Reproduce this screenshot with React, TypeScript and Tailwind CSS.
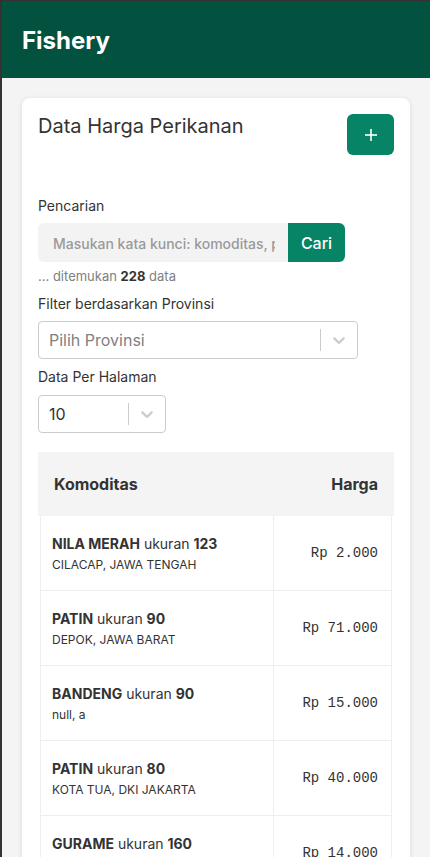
const rows = [
  { name: 'NILA MERAH', size: '123', area: 'CILACAP, JAWA TENGAH', price: 'Rp 2.000' },
  { name: 'PATIN', size: '90', area: 'DEPOK, JAWA BARAT', price: 'Rp 71.000' },
  { name: 'BANDENG', size: '90', area: 'null, a', price: 'Rp 15.000' },
  { name: 'PATIN', size: '80', area: 'KOTA TUA, DKI JAKARTA', price: 'Rp 40.000' },
  { name: 'GURAME', size: '160', area: 'BOGOR, JAWA BARAT', price: 'Rp 14.000' },
];

function Chevron() {
  return (
    <svg viewBox="0 0 20 20" className="h-5 w-5 fill-[#cccccc]">
      <path d="M4.516 7.548c0.436-0.446 1.043-0.481 1.576 0l3.908 3.747 3.908-3.747c0.533-0.481 1.141-0.446 1.574 0 0.436 0.445 0.408 1.197 0 1.615-0.406 0.418-4.695 4.502-4.695 4.502-0.217 0.223-0.502 0.335-0.787 0.335s-0.57-0.112-0.789-0.335c0 0-4.287-4.084-4.695-4.502s-0.436-1.17 0-1.615z" />
    </svg>
  );
}

function Select({ value, placeholder, width }: { value?: string; placeholder?: string; width: string }) {
  return (
    <div className={`flex h-[38px] items-center rounded border border-[#cccccc] bg-white ${width}`}>
      <div className="flex-1 pl-[10px] text-base">
        {value ? (
          <span className="text-[#333333]">{value}</span>
        ) : (
          <span className="text-[#808080]">{placeholder}</span>
        )}
      </div>
      <span className="h-[22px] w-px bg-[#cccccc]" />
      <div className="flex w-9 justify-center">
        <Chevron />
      </div>
    </div>
  );
}

export default function App() {
  return (
    <div
      className="h-[857px] overflow-hidden border-l-2 border-t border-[#333333] bg-[#f4f4f4] text-[#333333]"
      style={{ fontFamily: 'Inter, "Noto Sans", sans-serif' }}
    >
      {/* Header */}
      <header className="flex h-[77px] items-center bg-[#03513f] px-5 pt-[3px]">
        <h1 className="text-2xl font-bold text-white">Fishery</h1>
      </header>

      <main className="px-5 pt-5">
        <div className="rounded-lg bg-white p-4 shadow-[0_1px_5px_rgba(0,0,0,0.12)]">
          <div className="flex items-start justify-between">
            <h2 className="text-[20px] leading-6">Data Harga Perikanan</h2>
            <button className="flex h-[41px] w-[47px] items-center justify-center rounded-md bg-[#068465]">
              <svg viewBox="0 0 14 14" className="h-[14px] w-[14px]" stroke="white" strokeWidth="1.6">
                <line x1="7" y1="1" x2="7" y2="13" />
                <line x1="1" y1="7" x2="13" y2="7" />
              </svg>
            </button>
          </div>

          {/* Search */}
          <p className="mt-[41px] text-sm leading-5">Pencarian</p>
          <div className="mt-[7px] flex h-[39px] w-[307px]">
            <div className="flex min-w-0 flex-1 items-center rounded-l-md bg-[#f3f3f3] pl-[15px] pr-[13px]">
              <div className="overflow-hidden">
                <span className="whitespace-nowrap text-sm font-medium text-[#9a9a9a]">Masukan kata kunci: komoditas, provinsi</span>
              </div>
            </div>
            <button className="w-[57px] shrink-0 rounded-r-md bg-[#068465] text-base font-medium text-white">Cari</button>
          </div>
          <p className="mt-[6px] text-[13px] leading-4 text-[#808080]">
            ... ditemukan <b className="text-[#333333]">228</b> data
          </p>

          {/* Province filter */}
          <p className="mt-[10px] text-sm leading-5">Filter berdasarkan Provinsi</p>
          <div className="mt-[7px]">
            <Select placeholder="Pilih Provinsi" width="w-[320px]" />
          </div>

          <p className="mt-2 text-sm leading-5">Data Per Halaman</p>
          <div className="mt-2">
            <Select value="10" width="w-32" />
          </div>

          {/* Table */}
          <div className="mt-[19px]">
            <div className="flex h-16 items-center justify-between bg-[#f4f4f4] px-4 text-base font-bold">
              <span>Komoditas</span>
              <span>Harga</span>
            </div>
            <div className="mx-[2px]">
              {rows.map((r, i) => (
                <div key={i} className="flex h-[75px] border-x border-b border-[#eeeeee]">
                  <div className="flex w-[233px] flex-col justify-center border-r border-[#eeeeee] pl-[11px]">
                    <p className="text-sm leading-5">
                      <b>{r.name}</b> ukuran <b>{r.size}</b>
                    </p>
                    <p className="mt-[3px] text-xs leading-4">{r.area}</p>
                  </div>
                  <div
                    className="flex flex-1 items-center justify-end pr-[13px] text-sm"
                    style={{ fontFamily: '"Liberation Mono", monospace' }}
                  >
                    {r.price}
                  </div>
                </div>
              ))}
            </div>
          </div>
        </div>
      </main>
    </div>
  );
}
